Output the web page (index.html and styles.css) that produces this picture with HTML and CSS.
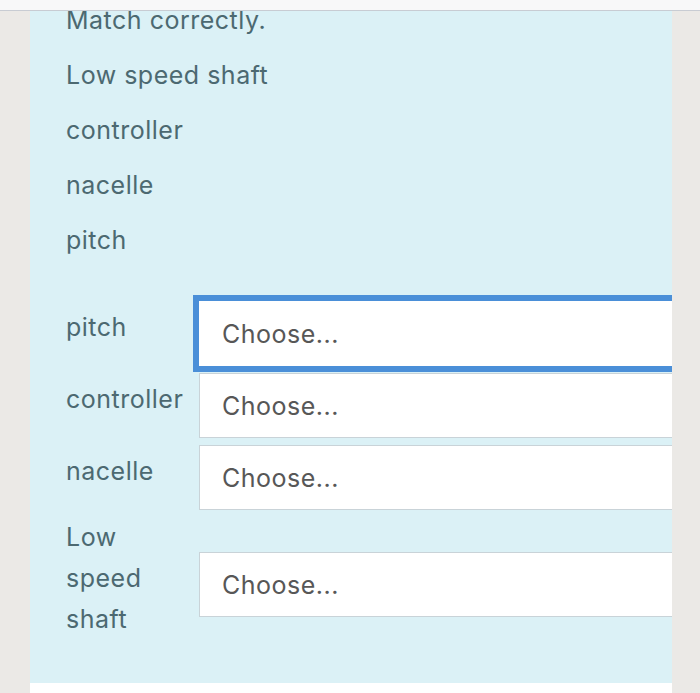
FILE: index.html
```html
<!DOCTYPE html>
<html>
<head>
<meta charset="utf-8">
<link rel="stylesheet" href="styles.css">
</head>
<body>
<div class="topbar"></div>
<div class="page">
  <div class="gutter"></div>
  <div class="column">
    <div class="panel">
      <div class="prompt">
        <div class="line">Match correctly.</div>
        <div class="line">Low speed shaft</div>
        <div class="line">controller</div>
        <div class="line">nacelle</div>
        <div class="line">pitch</div>
      </div>
      <div class="matches">
        <div class="label">pitch</div>
        <div class="select focused">Choose...</div>
        <div class="label">controller</div>
        <div class="select">Choose...</div>
        <div class="label">nacelle</div>
        <div class="select">Choose...</div>
        <div class="label">Low<br>speed<br>shaft</div>
        <div class="select">Choose...</div>
      </div>
    </div>
    <div class="next-card"></div>
  </div>
  <div class="gutter right"></div>
</div>
</body>
</html>
```

FILE: styles.css
```css
html, body {
  margin: 0;
  padding: 0;
  background: #ebe9e6;
  font-family: Inter, "Noto Sans", "Liberation Sans", sans-serif;
  height: 693px;
  overflow: hidden;
}

.topbar {
  position: fixed;
  top: 0;
  left: 0;
  right: 0;
  height: 10px;
  background: #f8f8f9;
  border-bottom: 1px solid #c8ccd3;
  z-index: 2;
}

.page {
  display: flex;
  height: 693px;
}

.gutter {
  width: 30px;
  flex: none;
  background: #ebe9e6;
}

.gutter.right {
  width: 28px;
}

.column {
  width: 642px;
  flex: none;
  display: flex;
  flex-direction: column;
}

.panel {
  background: #dbf1f6;
  padding: 0 0 31px 36px;
  overflow: hidden;
  height: 652px;
}

.prompt {
  color: #4c6971;
  font-size: 25px;
  letter-spacing: 0.5px;
}

.line {
  line-height: 41px;
  margin-bottom: 14px;
}

.matches {
  margin-top: 40px;
  display: grid;
  grid-template-columns: 133px 1fr;
  row-gap: 7px;
  align-items: center;
}

.label {
  color: #4c6971;
  font-size: 25px;
  letter-spacing: 0.5px;
  line-height: 41px;
  padding-bottom: 12px;
}

.select {
  height: 65px;
  box-sizing: border-box;
  background: #ffffff;
  border: 1px solid #c9d3d8;
  margin-right: -12px;
  padding-left: 22px;
  display: flex;
  align-items: center;
  color: #575757;
  font-size: 25px;
  letter-spacing: 0.5px;
}

.select.focused {
  border-color: #ffffff;
  box-shadow: 0 0 0 6px #4a8fd8;
}

.next-card {
  flex: 1;
  background: #ffffff;
}
```
